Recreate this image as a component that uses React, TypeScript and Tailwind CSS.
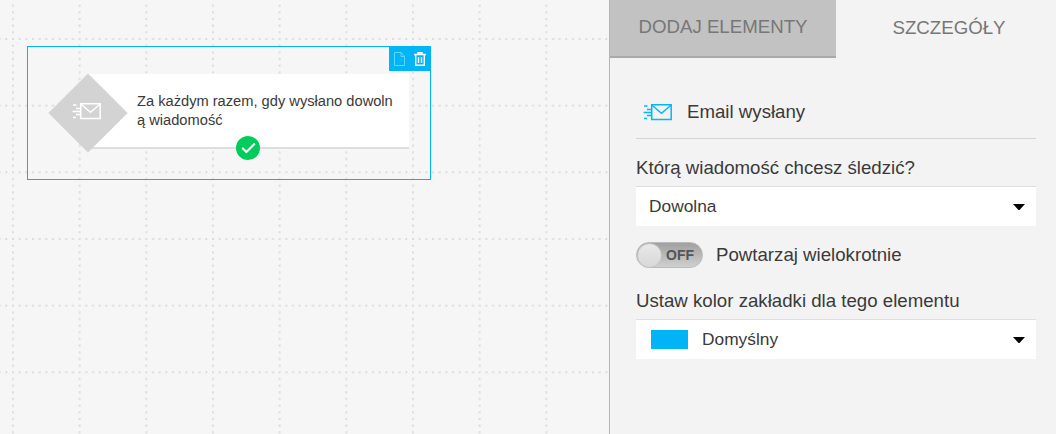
import { Check } from "lucide-react";

function MailIcon({ className }: { className: string }) {
  return (
    <svg viewBox="0 0 29 17" fill="none" stroke="currentColor" strokeWidth="1.5" className={className}>
      <path d="M8.7.8H28.2V15.6H8.7z" />
      <path d="M9 1.2l9.5 8 9.5-8" />
      <path d="M1 2h3.5M4 5.5h5M.5 8.5h8M4 11.5h4.5M1 14.5h3" />
    </svg>
  );
}

function Caret() {
  return (
    <svg viewBox="0 0 12 6" className="w-3 h-[6px] fill-black">
      <path d="M0 0h12L6.5 6h-1z" />
    </svg>
  );
}

function DotGrid() {
  return (
    <svg className="absolute inset-0 w-full h-full" width="609" height="434">
      <defs>
        <pattern id="grid" x="8" y="34" width="66.67" height="66.67" patternUnits="userSpaceOnUse">
          <path
            d="M5 0V66.67M0 5H66.67"
            stroke="#dcdcdc"
            strokeWidth="2"
            strokeDasharray="2 4.667"
            strokeDashoffset="-4"
            fill="none"
          />
        </pattern>
      </defs>
      <rect x="0" y="0" width="609" height="434" fill="url(#grid)" />
    </svg>
  );
}

function Node() {
  return (
    <div className="absolute left-[27px] top-[46px] w-[404px] h-[134px] border border-[#00b4f5]">
      <div className="absolute -right-px -top-px w-[42px] h-[25px] bg-[#00b4f5] flex items-center justify-center gap-[9px]">
        <svg viewBox="0 0 11 14" fill="none" stroke="#5fd8ff" strokeWidth="1" className="w-[11px] h-[14px]">
          <path d="M.5.5h6.5l3.5 4v9H.5zM7 .5v4h3.5" />
        </svg>
        <svg viewBox="0 0 12 14" fill="none" stroke="#fff" strokeWidth="1.4" className="w-[12px] h-[14px]">
          <path d="M0 2.5h12M4 2.5V.7h4v1.8M1.7 2.5v10.8h8.6V2.5M4.5 5v6M7.5 5v6" />
        </svg>
      </div>
      <div className="absolute left-[61px] top-[27px] w-[320px] h-[75px] bg-white border-b-2 border-[#dedede] pl-[48px] pr-[14px] flex items-center">
        <p className="text-[14.67px] leading-[19px] text-[#3a3a3a] break-all">
          Za każdym razem, gdy wysłano dowolną wiadomość
        </p>
      </div>
      <div className="absolute left-[20px] top-[26px] w-[79px] h-[79px] flex items-center justify-center">
        <div className="w-[56px] h-[56px] rotate-45 bg-[#d3d3d3]" />
        <MailIcon className="absolute left-[24px] top-[30px] w-[29px] h-[17px] text-white" />
      </div>
      <div className="absolute left-[208px] top-[89px] w-6 h-6 rounded-full bg-[#00cc5c] flex items-center justify-center">
        <Check size={17} strokeWidth={3} className="text-white" />
      </div>
    </div>
  );
}

function Select({ children }: { children: React.ReactNode }) {
  return (
    <div className="h-10 bg-white border-t border-[#dedede] flex items-center justify-between pl-[13px] pr-[11px] text-[#3a3a3a] text-[17.33px]">
      {children}
      <Caret />
    </div>
  );
}

export default function App() {
  return (
    <div className="w-[1056px] h-[434px] flex overflow-hidden bg-[#f6f6f6] font-['Liberation_Sans',Arial,sans-serif]">
      <div className="relative w-[609px] h-full">
        <DotGrid />
        <Node />
      </div>
      <aside className="w-[447px] h-full bg-[#f3f3f3] border-l border-[#b5b5b5] overflow-hidden">
        <div className="flex h-[58px] text-[18.67px] text-[#777]">
          <div className="w-[226px] shrink-0 bg-[#c2c2c2] border-b-2 border-[#aaa] flex items-center justify-center pb-[2px]">
            DODAJ ELEMENTY
          </div>
          <div className="w-[226px] shrink-0 flex items-center justify-center pb-[2px]">SZCZEGÓŁY</div>
        </div>
        <div className="pl-[26px] pr-[20px]">
          <div className="h-[81px] flex items-center border-b border-[#d5d5d5] pl-[7px] pt-[28px] gap-[15px] text-[#3a3a3a] text-[18.67px]">
            <MailIcon className="w-[29px] h-[17px] text-[#00b9f7]" />
            Email wysłany
          </div>
          <p className="mt-[18px] mb-[7px] text-[18.67px] leading-[22px] text-[#3a3a3a]">Którą wiadomość chcesz śledzić?</p>
          <Select>Dowolna</Select>
          <div className="flex items-center mt-[15px] gap-[13px]">
            <div className="w-[67px] h-[26px] rounded-full bg-gradient-to-b from-[#a0a0a0] to-[#d0d0d0] border border-[#bbb] flex items-center justify-between pr-[8px]">
              <div className="w-[25px] h-[25px] rounded-full bg-gradient-to-b from-[#e8e8e8] to-[#d8d8d8] border border-[#c4c4c4]" />
              <span className="text-[14px] font-bold text-[#555]">OFF</span>
            </div>
            <span className="text-[18.67px] text-[#3a3a3a]">Powtarzaj wielokrotnie</span>
          </div>
          <p className="mt-[21px] mb-[7px] text-[18.67px] leading-[22px] text-[#3a3a3a]">Ustaw kolor zakładki dla tego elementu</p>
          <Select>
            <div className="flex items-center gap-[14px] ml-[2px]">
              <div className="w-[37px] h-[19px] bg-[#00b4f5]" />
              Domyślny
            </div>
          </Select>
        </div>
      </aside>
    </div>
  );
}
